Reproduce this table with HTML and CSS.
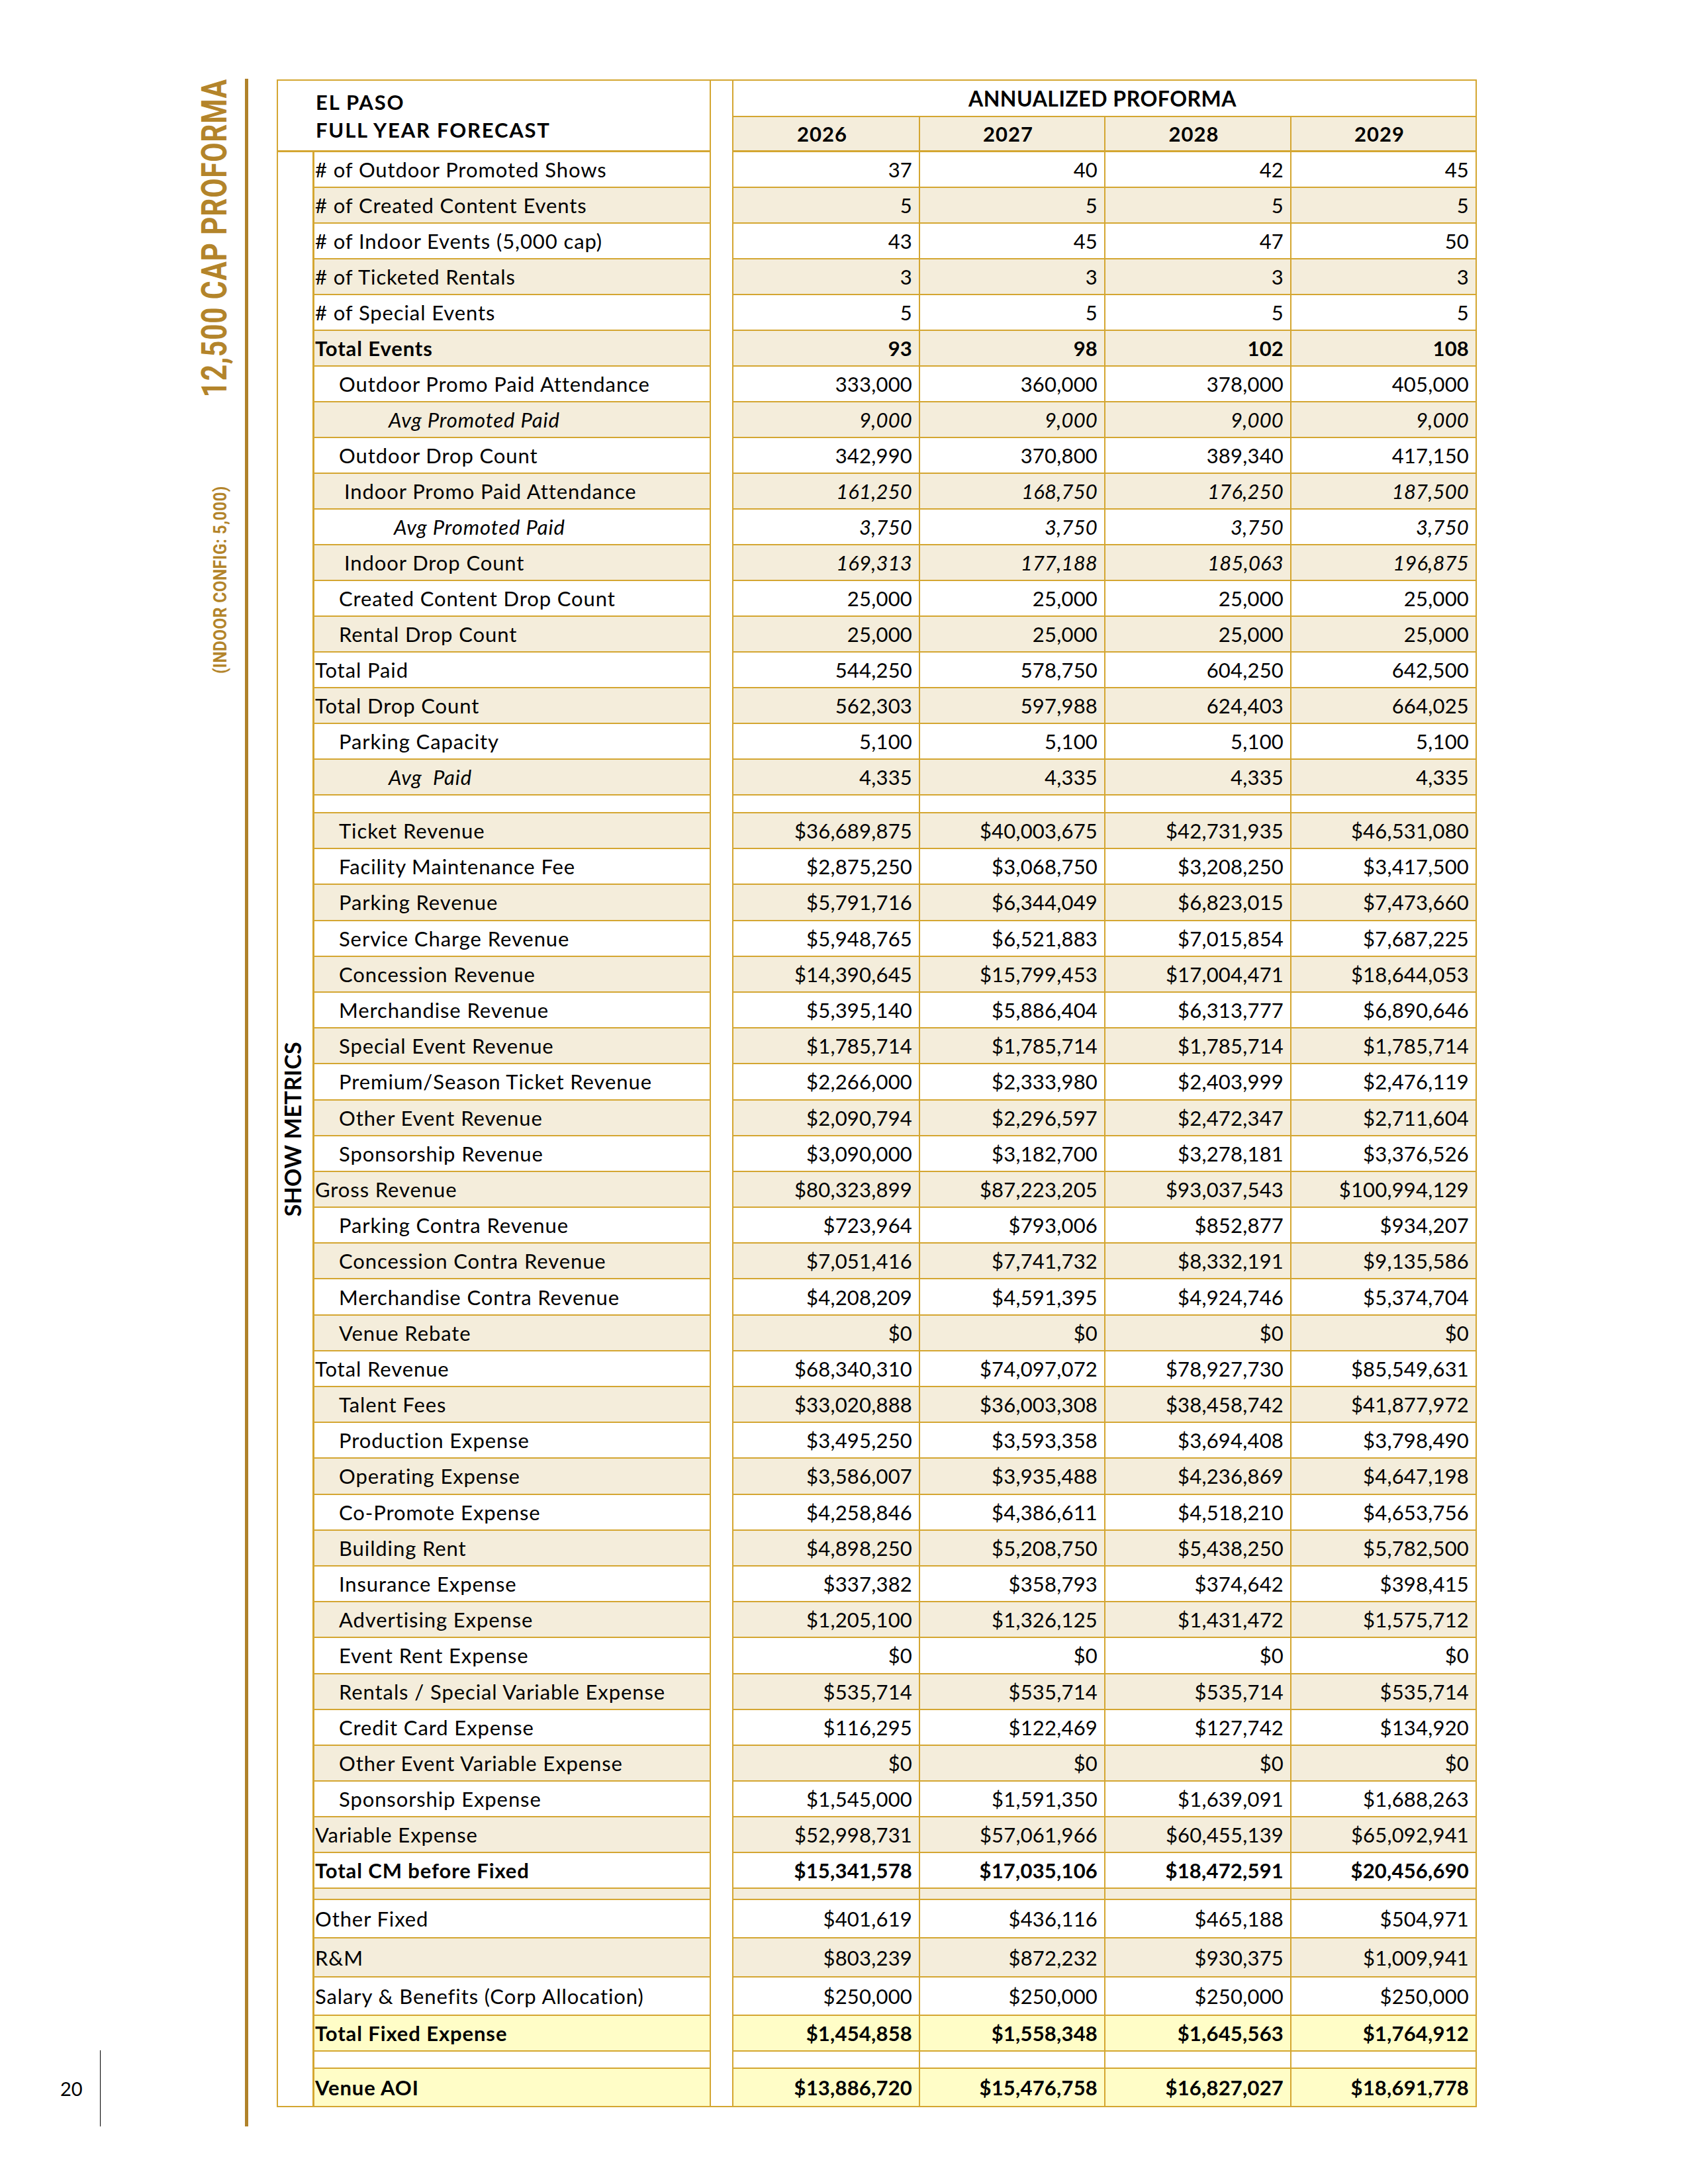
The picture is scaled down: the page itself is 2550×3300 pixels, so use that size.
FILE: index.html
```html
<!DOCTYPE html>
<html lang="en">
<head>
<meta charset="utf-8">
<title>El Paso Full Year Forecast</title>
<link rel="stylesheet" href="styles.css">
</head>
<body>
<div class="page">
  <aside class="rail">
    <div class="titles">
      <div class="vwrap vwrap1"><span class="vt vt1">12,500 CAP PROFORMA</span></div>
      <div class="vwrap vwrap2"><span class="vt vt2">(INDOOR CONFIG: 5,000)</span></div>
    </div>
    <div class="folio"><span class="folio-num">20</span><span class="folio-rule"></span></div>
  </aside>
  <div class="bar"></div>
  <main class="sheet">
    <div class="title"><div>EL PASO</div><div>FULL YEAR FORECAST</div></div>
    <div class="gap"></div>
    <div class="annual">ANNUALIZED PROFORMA</div>
    <div class="yr y1">2026</div>
    <div class="yr y2">2027</div>
    <div class="yr y3">2028</div>
    <div class="yr y4">2029</div>
    <div class="side"><span>SHOW METRICS</span></div>

    <div class="r"><div># of Outdoor Promoted Shows</div><div>37</div><div>40</div><div>42</div><div>45</div></div>
    <div class="r c"><div># of Created Content Events</div><div>5</div><div>5</div><div>5</div><div>5</div></div>
    <div class="r"><div># of Indoor Events (5,000 cap)</div><div>43</div><div>45</div><div>47</div><div>50</div></div>
    <div class="r c"><div># of Ticketed Rentals</div><div>3</div><div>3</div><div>3</div><div>3</div></div>
    <div class="r"><div># of Special Events</div><div>5</div><div>5</div><div>5</div><div>5</div></div>
    <div class="r c b"><div>Total Events</div><div>93</div><div>98</div><div>102</div><div>108</div></div>
    <div class="r"><div class="l1">Outdoor Promo Paid Attendance</div><div>333,000</div><div>360,000</div><div>378,000</div><div>405,000</div></div>
    <div class="r c iv"><div class="l3 it">Avg Promoted Paid</div><div>9,000</div><div>9,000</div><div>9,000</div><div>9,000</div></div>
    <div class="r"><div class="l1">Outdoor Drop Count</div><div>342,990</div><div>370,800</div><div>389,340</div><div>417,150</div></div>
    <div class="r c iv"><div class="l2">Indoor Promo Paid Attendance</div><div>161,250</div><div>168,750</div><div>176,250</div><div>187,500</div></div>
    <div class="r iv"><div class="l4 it">Avg Promoted Paid</div><div>3,750</div><div>3,750</div><div>3,750</div><div>3,750</div></div>
    <div class="r c iv"><div class="l2">Indoor Drop Count</div><div>169,313</div><div>177,188</div><div>185,063</div><div>196,875</div></div>
    <div class="r"><div class="l1">Created Content Drop Count</div><div>25,000</div><div>25,000</div><div>25,000</div><div>25,000</div></div>
    <div class="r c"><div class="l1">Rental Drop Count</div><div>25,000</div><div>25,000</div><div>25,000</div><div>25,000</div></div>
    <div class="r"><div>Total Paid</div><div>544,250</div><div>578,750</div><div>604,250</div><div>642,500</div></div>
    <div class="r c"><div>Total Drop Count</div><div>562,303</div><div>597,988</div><div>624,403</div><div>664,025</div></div>
    <div class="r"><div class="l1">Parking Capacity</div><div>5,100</div><div>5,100</div><div>5,100</div><div>5,100</div></div>
    <div class="r c"><div class="l3 it">Avg&nbsp; Paid</div><div>4,335</div><div>4,335</div><div>4,335</div><div>4,335</div></div>
    <div class="r"><div></div><div></div><div></div><div></div><div></div></div>
    <div class="r c"><div class="l1">Ticket Revenue</div><div>$36,689,875</div><div>$40,003,675</div><div>$42,731,935</div><div>$46,531,080</div></div>
    <div class="r"><div class="l1">Facility Maintenance Fee</div><div>$2,875,250</div><div>$3,068,750</div><div>$3,208,250</div><div>$3,417,500</div></div>
    <div class="r c"><div class="l1">Parking Revenue</div><div>$5,791,716</div><div>$6,344,049</div><div>$6,823,015</div><div>$7,473,660</div></div>
    <div class="r"><div class="l1">Service Charge Revenue</div><div>$5,948,765</div><div>$6,521,883</div><div>$7,015,854</div><div>$7,687,225</div></div>
    <div class="r c"><div class="l1">Concession Revenue</div><div>$14,390,645</div><div>$15,799,453</div><div>$17,004,471</div><div>$18,644,053</div></div>
    <div class="r"><div class="l1">Merchandise Revenue</div><div>$5,395,140</div><div>$5,886,404</div><div>$6,313,777</div><div>$6,890,646</div></div>
    <div class="r c"><div class="l1">Special Event Revenue</div><div>$1,785,714</div><div>$1,785,714</div><div>$1,785,714</div><div>$1,785,714</div></div>
    <div class="r"><div class="l1">Premium/Season Ticket Revenue</div><div>$2,266,000</div><div>$2,333,980</div><div>$2,403,999</div><div>$2,476,119</div></div>
    <div class="r c"><div class="l1">Other Event Revenue</div><div>$2,090,794</div><div>$2,296,597</div><div>$2,472,347</div><div>$2,711,604</div></div>
    <div class="r"><div class="l1">Sponsorship Revenue</div><div>$3,090,000</div><div>$3,182,700</div><div>$3,278,181</div><div>$3,376,526</div></div>
    <div class="r c"><div>Gross Revenue</div><div>$80,323,899</div><div>$87,223,205</div><div>$93,037,543</div><div>$100,994,129</div></div>
    <div class="r"><div class="l1">Parking Contra Revenue</div><div>$723,964</div><div>$793,006</div><div>$852,877</div><div>$934,207</div></div>
    <div class="r c"><div class="l1">Concession Contra Revenue</div><div>$7,051,416</div><div>$7,741,732</div><div>$8,332,191</div><div>$9,135,586</div></div>
    <div class="r"><div class="l1">Merchandise Contra Revenue</div><div>$4,208,209</div><div>$4,591,395</div><div>$4,924,746</div><div>$5,374,704</div></div>
    <div class="r c"><div class="l1">Venue Rebate</div><div>$0</div><div>$0</div><div>$0</div><div>$0</div></div>
    <div class="r"><div>Total Revenue</div><div>$68,340,310</div><div>$74,097,072</div><div>$78,927,730</div><div>$85,549,631</div></div>
    <div class="r c"><div class="l1">Talent Fees</div><div>$33,020,888</div><div>$36,003,308</div><div>$38,458,742</div><div>$41,877,972</div></div>
    <div class="r"><div class="l1">Production Expense</div><div>$3,495,250</div><div>$3,593,358</div><div>$3,694,408</div><div>$3,798,490</div></div>
    <div class="r c"><div class="l1">Operating Expense</div><div>$3,586,007</div><div>$3,935,488</div><div>$4,236,869</div><div>$4,647,198</div></div>
    <div class="r"><div class="l1">Co-Promote Expense</div><div>$4,258,846</div><div>$4,386,611</div><div>$4,518,210</div><div>$4,653,756</div></div>
    <div class="r c"><div class="l1">Building Rent</div><div>$4,898,250</div><div>$5,208,750</div><div>$5,438,250</div><div>$5,782,500</div></div>
    <div class="r"><div class="l1">Insurance Expense</div><div>$337,382</div><div>$358,793</div><div>$374,642</div><div>$398,415</div></div>
    <div class="r c"><div class="l1">Advertising Expense</div><div>$1,205,100</div><div>$1,326,125</div><div>$1,431,472</div><div>$1,575,712</div></div>
    <div class="r"><div class="l1">Event Rent Expense</div><div>$0</div><div>$0</div><div>$0</div><div>$0</div></div>
    <div class="r c"><div class="l1">Rentals / Special Variable Expense</div><div>$535,714</div><div>$535,714</div><div>$535,714</div><div>$535,714</div></div>
    <div class="r"><div class="l1">Credit Card Expense</div><div>$116,295</div><div>$122,469</div><div>$127,742</div><div>$134,920</div></div>
    <div class="r c"><div class="l1">Other Event Variable Expense</div><div>$0</div><div>$0</div><div>$0</div><div>$0</div></div>
    <div class="r"><div class="l1">Sponsorship Expense</div><div>$1,545,000</div><div>$1,591,350</div><div>$1,639,091</div><div>$1,688,263</div></div>
    <div class="r c"><div>Variable Expense</div><div>$52,998,731</div><div>$57,061,966</div><div>$60,455,139</div><div>$65,092,941</div></div>
    <div class="r b"><div>Total CM before Fixed</div><div>$15,341,578</div><div>$17,035,106</div><div>$18,472,591</div><div>$20,456,690</div></div>
    <div class="r c"><div></div><div></div><div></div><div></div><div></div></div>
    <div class="r"><div>Other Fixed</div><div>$401,619</div><div>$436,116</div><div>$465,188</div><div>$504,971</div></div>
    <div class="r c"><div>R&amp;M</div><div>$803,239</div><div>$872,232</div><div>$930,375</div><div>$1,009,941</div></div>
    <div class="r"><div>Salary &amp; Benefits (Corp Allocation)</div><div>$250,000</div><div>$250,000</div><div>$250,000</div><div>$250,000</div></div>
    <div class="r y b"><div>Total Fixed Expense</div><div>$1,454,858</div><div>$1,558,348</div><div>$1,645,563</div><div>$1,764,912</div></div>
    <div class="r"><div></div><div></div><div></div><div></div><div></div></div>
    <div class="r y b end"><div>Venue AOI</div><div>$13,886,720</div><div>$15,476,758</div><div>$16,827,027</div><div>$18,691,778</div></div>
  </main>
</div>
</body>
</html>
```
FILE: styles.css
```css
* { box-sizing: border-box; }
html, body { margin: 0; background: #fff; }
body { font-family: Lato, "Liberation Sans", sans-serif; color: #000; }

.page { display: flex; align-items: flex-start; padding-top: 119px; }

.rail { width: 370px; height: 3094px; flex: none; display: flex; flex-direction: column; justify-content: space-between; }
.titles { display: flex; flex-direction: column; align-items: flex-end; padding-top: 3px; }
.vwrap { display: flex; align-items: center; justify-content: center; }
.vwrap1 { width: 53px; height: 475px; margin-right: 19px; }
.vwrap2 { width: 28px; height: 277px; margin-top: 141px; margin-right: 23px; }
.vt { writing-mode: vertical-rl; white-space: nowrap; line-height: 1; font-family: Roboto, "Liberation Sans", sans-serif; font-weight: 700; color: #B3842A; }
.vt1 { font-size: 53px; letter-spacing: 1px; transform: rotate(180deg) scaleY(0.80); }
.vt2 { font-size: 28px; letter-spacing: 0.5px; transform: rotate(180deg) scaleY(0.87); }

.folio { display: flex; align-items: center; height: 115px; padding-left: 91px; }
.folio-num { width: 60px; font-size: 29px; line-height: 1; }
.folio-rule { width: 1px; height: 115px; background: #000; }

.bar { width: 5px; height: 3094px; flex: none; background: #B0822A; }

.sheet {
  margin-left: 43px;
  margin-top: 1px;
  display: grid;
  border: 2px solid #D4A631;
  grid-template-columns: 55px 597px 36px 282px 280px 281px 278px;
  grid-template-rows: 55px 53px repeat(18, 54px) 27px repeat(29, 54.2px) 54px 17px 58px 59px 58px 54px 26px 56px;
}

.title { grid-column: 1 / 3; grid-row: 1 / 3; border-bottom: 3px solid #D4A631; display: flex; flex-direction: column; justify-content: center; padding-left: 57px; font-weight: 700; font-size: 31px; letter-spacing: 1.8px; line-height: 42px; }
.gap { grid-column: 3; grid-row: 1 / span 58; border-left: 2px solid #D4A631; border-right: 2px solid #D4A631; }
.annual { grid-column: 4 / 8; grid-row: 1; border-bottom: 2px solid #D4A631; display: flex; align-items: center; justify-content: center; padding-right: 6px; font-weight: 700; font-size: 32px; letter-spacing: 0.5px; }
.yr { grid-row: 2; background: #F4EDDB; border-bottom: 3px solid #D4A631; border-right: 2px solid #D4A631; display: flex; align-items: center; justify-content: center; padding-right: 12px; font-weight: 700; font-size: 31px; letter-spacing: 1px; }
.y1 { grid-column: 4; }
.y2 { grid-column: 5; }
.y3 { grid-column: 6; }
.y4 { grid-column: 7; border-right: 0; }

.side { grid-column: 1; grid-row: 3 / span 56; border-right: 3px solid #D4A631; display: flex; align-items: center; justify-content: center; padding-right: 8px; }
.side span { writing-mode: vertical-rl; transform: rotate(180deg); white-space: nowrap; line-height: 1; font-weight: 700; font-size: 34px; letter-spacing: 0.3px; }

.r { display: contents; }
.r > * { border-bottom: 2px solid #D4A631; display: flex; align-items: center; white-space: nowrap; font-size: 31px; }
.r > :first-child { padding-left: 1px; letter-spacing: 0.9px; }
.r > :not(:first-child) { justify-content: flex-end; padding-right: 10px; border-right: 2px solid #D4A631; letter-spacing: 0.2px; }
.r > :last-child { border-right: 0; }
.r > .l1 { padding-left: 37px; }
.r > .l2 { padding-left: 45px; }
.r > .l3 { padding-left: 112px; }
.r > .l4 { padding-left: 120px; }
.r > .it { font-style: italic; }
.iv > :not(:first-child) { font-style: italic; }
.c > * { background: #F4EDDB; }
.y > * { background: #FFFDC7; }
.b > * { font-weight: 700; }
.end > * { border-bottom: 0; }
```
